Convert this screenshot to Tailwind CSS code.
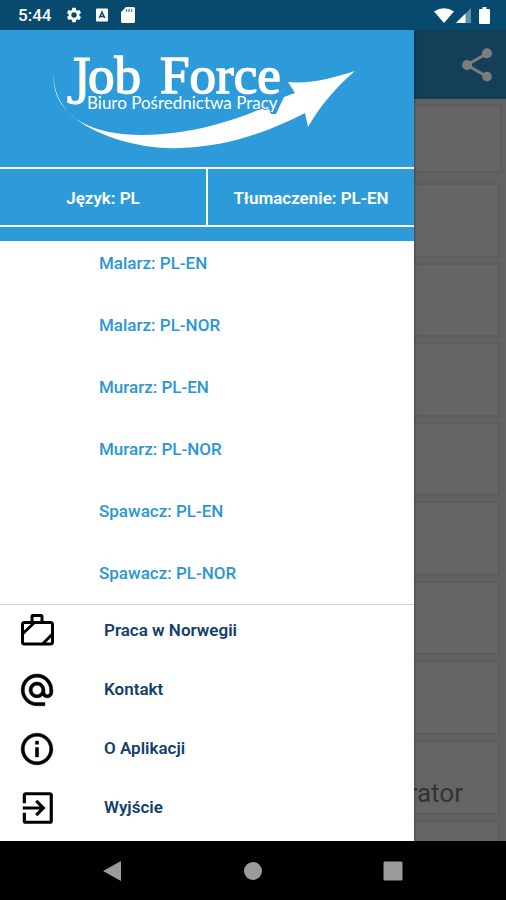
<!DOCTYPE html>
<html lang="pl">
<head>
<meta charset="utf-8">
<meta name="viewport" content="width=device-width, initial-scale=1">
<title>Job Force</title>
<script src="https://cdn.jsdelivr.net/npm/@tailwindcss/browser@4"></script>
</head>
<body class="flex h-screen min-h-[900px] flex-col bg-black font-[Roboto,sans-serif]">

<!-- Status bar -->
<header class="flex h-[30px] shrink-0 items-center justify-between bg-[#074a6e] pr-4 pl-[18px] text-white">
  <div class="flex items-center gap-[14px]">
    <span class="text-[17px] font-medium leading-5">5:44</span>
    <div class="flex items-center gap-[10px]">
      <svg class="size-[18px]" viewBox="0 0 24 24" fill="currentColor"><path d="M19.14 12.94c.04-.3.06-.61.06-.94 0-.32-.02-.64-.07-.94l2.03-1.58a.49.49 0 0 0 .12-.61l-1.92-3.32a.49.49 0 0 0-.59-.22l-2.39.96c-.5-.38-1.03-.7-1.62-.94l-.36-2.54a.48.48 0 0 0-.48-.41h-3.84a.47.47 0 0 0-.47.41l-.36 2.54c-.59.24-1.13.57-1.62.94l-2.39-.96a.48.48 0 0 0-.59.22L2.74 8.87a.47.47 0 0 0 .12.61l2.03 1.58c-.05.3-.09.63-.09.94s.02.64.07.94l-2.03 1.58a.49.49 0 0 0-.12.61l1.92 3.32c.12.22.37.29.59.22l2.39-.96c.5.38 1.03.7 1.62.94l.36 2.54c.05.24.24.41.48.41h3.84c.24 0 .44-.17.47-.41l.36-2.54c.59-.24 1.13-.56 1.62-.94l2.39.96c.22.08.47 0 .59-.22l1.92-3.32a.47.47 0 0 0-.12-.61zM12 15.6A3.6 3.6 0 1 1 12 8.4a3.6 3.6 0 0 1 0 7.2z"/></svg>
      <svg class="mx-[3px] h-[14px] w-3" viewBox="0 0 12 14"><rect y=".5" width="12" height="13" rx="1" fill="#fff"/><path d="M3.300 10 6 4l2.700 6M4.600 8.500h2.800" fill="none" stroke="#074a6e" stroke-width="1.500"/></svg>
      <svg class="h-4 w-[14px]" viewBox="0 0 14 16"><path d="M5 0h7.500A1.500 1.500 0 0 1 14 1.500v13a1.500 1.500 0 0 1-1.500 1.500h-11A1.500 1.500 0 0 1 0 14.500V5z" fill="#fff"/><path d="M5.500 2v3M8 2v3M10.500 2v3" stroke="#5c8ba5" stroke-width="1.400"/></svg>
    </div>
  </div>
  <div class="flex items-center">
    <svg class="h-[15px] w-5" viewBox="0 0 20 15"><path d="M0 3.500Q10-3 20 3.500L10 15z" fill="#fff"/></svg>
    <svg class="ml-[2px] size-[15px]" viewBox="0 0 15 15"><path d="M15 0v15H0z" fill="#5f91ab"/><path d="M9.500 5.500V15H0z" fill="#fff"/></svg>
    <svg class="ml-[8px] h-[17px] w-[11px]" viewBox="0 0 11 17"><path d="M3.500 0h4v2H10a1 1 0 0 1 1 1v13a1 1 0 0 1-1 1H1a1 1 0 0 1-1-1V3a1 1 0 0 1 1-1h2.500z" fill="#fff"/></svg>
  </div>
</header>

<div class="relative min-h-0 flex-1 overflow-hidden bg-[#616264]">
  <!-- Dimmed page behind the drawer -->
  <main>
    <div class="flex h-[69px] items-center justify-end bg-[#133f58] pr-[9px]">
      <button type="button" aria-label="Udostępnij" class="text-[#7d7d7d]">
        <svg class="size-10" viewBox="0 0 24 24" fill="currentColor"><path d="M18 16.080c-.76 0-1.440.3-1.960.77L8.910 12.700c.05-.23.09-.46.09-.7s-.04-.47-.09-.7l7.050-4.110c.54.5 1.250.81 2.040.81a3 3 0 1 0-3-3c0 .24.04.47.09.7L8.040 9.810A3 3 0 1 0 6 15c.79 0 1.500-.31 2.040-.81l7.120 4.160c-.05.21-.08.43-.08.65a2.920 2.920 0 1 0 2.920-2.920z"/></svg>
      </button>
    </div>
    <div class="flex flex-col gap-[5px] pt-[5px] pr-[6px]">
      <div class="-mr-[2px] mb-[5px] h-[69px] border-2 border-[#5c5d60] bg-[#656565]"></div>
      <div class="h-[75px] border-2 border-[#5c5d60] bg-[#656565]"></div>
      <div class="h-[74px] border-2 border-[#5c5d60] bg-[#656565]"></div>
      <div class="h-[75px] border-2 border-[#5c5d60] bg-[#656565]"></div>
      <div class="h-[74px] border-2 border-[#5c5d60] bg-[#656565]"></div>
      <div class="h-[75px] border-2 border-[#5c5d60] bg-[#656565]"></div>
      <div class="h-[74px] border-2 border-[#5c5d60] bg-[#656565]"></div>
      <div class="h-[75px] border-2 border-[#5c5d60] bg-[#656565]"></div>
      <div class="flex h-[75px] items-end justify-end border-2 border-[#5c5d60] bg-[#656565] pr-[35px] pb-1 text-[26px] leading-8 text-[#333]">rator</div>
      <div class="h-[75px] border-2 border-[#5c5d60] bg-[#656565]"></div>
    </div>
  </main>

  <!-- Navigation drawer -->
  <aside class="absolute inset-y-0 left-0 flex w-9/11 flex-col bg-white shadow-[0_0_3px_rgba(0,0,0,0.5)]">
    <div class="bg-[#2d9bd9] pb-[14px]">
      <div class="flex h-[137px] items-start justify-center">
        <svg class="h-[137px] w-[414px] shrink-0" viewBox="0 30 414 137" fill="#fff" role="img" aria-label="Job Force">
          <path d="M54 71C52 96 66 114 83 123C105 135 140 138 180 132C215 127 245 116 268 106L271 114L276 114L284 97L295 93L288 82C311 84 333 78 355 71C340 84 323 101 308 127L305 113C270 131 228 147 180 148C140 150 94 135 74 117C58 105 52 90 54 71z"/>
          <text x="72" y="94" font-family="DejaVu Serif, serif" font-size="49" stroke="#fff" stroke-width="1">J</text>
          <text x="88" y="93" font-family="Liberation Serif, serif" font-size="53" stroke="#fff" stroke-width="1.500">ob</text>
          <text x="160" y="93" font-family="Liberation Serif, serif" font-size="53" stroke="#fff" stroke-width="1.500">Force</text>
          <text x="87" y="109" font-family="Lato, sans-serif" font-size="17" stroke="#2d9bd9" stroke-width="2" stroke-linejoin="round" paint-order="stroke">Biuro Pośrednictwa Pracy</text>
        </svg>
      </div>
      <div class="flex h-[60px] border-y-2 border-white text-[17px] font-semibold text-white">
        <button type="button" class="flex-1 border-r-2 border-white pt-[3px]">Język: PL</button>
        <button type="button" class="flex-1 pt-[3px]">Tłumaczenie: PL-EN</button>
      </div>
    </div>

    <nav class="h-[363px] shrink-0 overflow-hidden text-[17px] font-medium text-[#2b96d4]">
      <ul class="-mt-2">
        <li><a href="#" class="flex h-[62px] items-center pl-[99px]">Malarz: PL-EN</a></li>
        <li><a href="#" class="flex h-[62px] items-center pl-[99px]">Malarz: PL-NOR</a></li>
        <li><a href="#" class="flex h-[62px] items-center pl-[99px]">Murarz: PL-EN</a></li>
        <li><a href="#" class="flex h-[62px] items-center pl-[99px]">Murarz: PL-NOR</a></li>
        <li><a href="#" class="flex h-[62px] items-center pl-[99px]">Spawacz: PL-EN</a></li>
        <li><a href="#" class="flex h-[62px] items-center pl-[99px]">Spawacz: PL-NOR</a></li>
      </ul>
    </nav>

    <nav class="border-t border-[#d2d2d2] pt-px text-[17px] font-semibold text-[#13406b]">
      <ul class="flex flex-col gap-[9px]">
        <li><a href="#" class="flex h-[50px] items-center gap-12 pl-[18px]">
          <svg class="size-[38px] text-black" viewBox="0 0 38 38" fill="none" stroke="currentColor" stroke-width="3"><rect x="4.500" y="10.500" width="30" height="21.500" rx="2"/><path d="M14 10V4.500a1 1 0 0 1 1-1h8a1 1 0 0 1 1 1V10"/><path d="M5 21.500 16 11M25 31.500 34 22.500" stroke-width="3"/></svg>
          Praca w Norwegii</a></li>
        <li><a href="#" class="flex h-[50px] items-center gap-12 pl-[18px]">
          <svg class="size-[38px] text-black" viewBox="0 0 24 24" fill="currentColor"><path d="M12 1.950c-5.520 0-10 4.480-10 10s4.480 10 10 10h5v-2h-5c-4.340 0-8-3.660-8-8s3.660-8 8-8 8 3.660 8 8v1.430c0 .79-.71 1.570-1.500 1.570s-1.500-.78-1.500-1.570v-1.430c0-2.760-2.240-5-5-5s-5 2.240-5 5 2.240 5 5 5c1.380 0 2.640-.56 3.540-1.470.65.89 1.770 1.470 2.960 1.470 1.970 0 3.500-1.600 3.500-3.570v-1.430c0-5.520-4.480-10-10-10zm0 13c-1.660 0-3-1.340-3-3s1.340-3 3-3 3 1.340 3 3-1.340 3-3 3z" stroke="currentColor" stroke-width=".3"/></svg>
          Kontakt</a></li>
        <li><a href="#" class="flex h-[50px] items-center gap-12 pl-[18px]">
          <svg class="size-[38px] text-black" viewBox="0 0 24 24" fill="currentColor"><path d="M11 7h2v2h-2zm0 4h2v6h-2zm1-9C6.480 2 2 6.480 2 12s4.480 10 10 10 10-4.480 10-10S17.520 2 12 2zm0 18c-4.410 0-8-3.590-8-8s3.590-8 8-8 8 3.590 8 8-3.590 8-8 8z" stroke="currentColor" stroke-width=".3"/></svg>
          O Aplikacji</a></li>
        <li><a href="#" class="flex h-[50px] items-center gap-12 pl-[18px]">
          <svg class="size-[38px] text-black" viewBox="0 0 24 24" fill="none" stroke="currentColor" stroke-width="2"><path d="M4 9V4a1 1 0 0 1 1-1h15a1 1 0 0 1 1 1v16a1 1 0 0 1-1 1H5a1 1 0 0 1-1-1v-5M3 12h12.500M11.500 7.500 16 12l-4.500 4.500"/></svg>
          Wyjście</a></li>
      </ul>
    </nav>
  </aside>
</div>

<!-- System navigation -->
<footer class="grid h-[59px] shrink-0 grid-cols-3 place-items-center bg-black px-[43px] text-[#9b9b9b]">
  <button type="button" aria-label="Wstecz"><svg class="size-5" viewBox="0 0 20 20" fill="currentColor"><path d="M0 10 18 0v20z"/></svg></button>
  <button type="button" aria-label="Ekran główny"><svg class="size-5" viewBox="0 0 20 20" fill="currentColor"><circle cx="10" cy="10" r="9"/></svg></button>
  <button type="button" aria-label="Ostatnie aplikacje"><svg class="size-5" viewBox="0 0 20 20" fill="currentColor"><rect x=".5" y=".5" width="19" height="19" rx="1.500"/></svg></button>
</footer>
</body>
</html>
